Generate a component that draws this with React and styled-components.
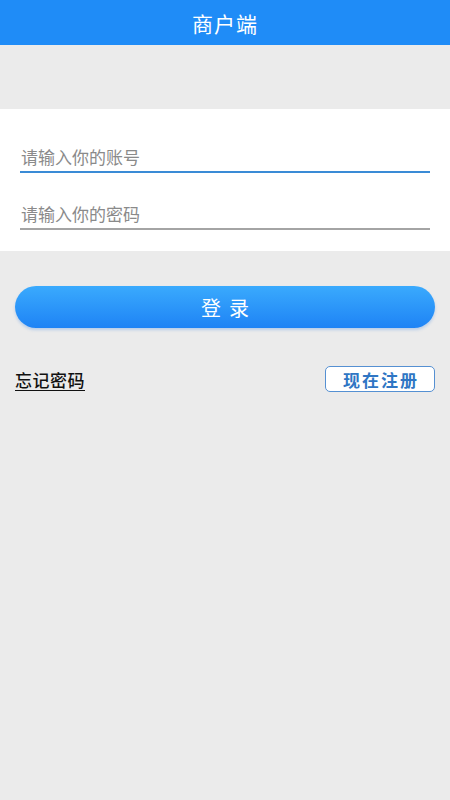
import React from 'react'
import styled, { createGlobalStyle } from 'styled-components';

const Global = createGlobalStyle`
  html, body {
    margin: 0;
    padding: 0;
    background: #ebebeb;
    font-family: "Noto Sans CJK SC", "Noto Sans", sans-serif;
  }
`;

const Page = styled.div`
  min-height: 800px;
  background: #ebebeb;
  display: flex;
  flex-direction: column;
`;

const Header = styled.div`
  height: 45px;
  background: #1f8cf7;
  color: white;
  font-size: 21px;
  display: flex;
  align-items: center;
  justify-content: center;
  letter-spacing: 1px;
`;

const Panel = styled.div`
  margin-top: 64px;
  background: white;
  padding: 30px 20px 21px;
  display: flex;
  flex-direction: column;
  gap: 23px;
`;

const Field = styled.input`
  border: none;
  outline: none;
  border-bottom: 2px solid ${p => (p.$active ? '#3a8bd6' : '#a4a4a4')};
  font-family: inherit;
  font-size: 17px;
  padding: 6px 1px 3px;
  height: 34px;
  box-sizing: border-box;
  background: transparent;
  &::placeholder {
    color: #8a8a8a;
  }
`;

const LoginButton = styled.button`
  margin: 35px 15px 0;
  height: 42px;
  border: none;
  border-radius: 21px;
  background: linear-gradient(to bottom, #3aaafd, #1e83f5);
  box-shadow: 0 2px 3px rgba(30, 120, 230, 0.25);
  color: white;
  font-family: inherit;
  font-size: 20px;
  letter-spacing: 8px;
  text-indent: 8px;
`;

const Row = styled.div`
  margin: 38px 15px 0;
  display: flex;
  align-items: center;
  justify-content: space-between;
`;

const Forgot = styled.a`
  color: #111;
  font-size: 17px;
  font-weight: 500;
  letter-spacing: 0.5px;
  text-decoration: underline;
  text-underline-offset: 3px;
`;

const Register = styled.button`
  width: 110px;
  height: 26px;
  box-sizing: border-box;
  background: white;
  border: 1px solid #5590d2;
  border-radius: 5px;
  color: #2f76c4;
  font-family: inherit;
  font-size: 17px;
  font-weight: bold;
  letter-spacing: 2px;
  text-indent: 2px;
  line-height: 1;
  padding: 0;
`;

const App = () => {
    return (
        <>
            <Global />
            <Page>
                <Header>商户端</Header>
                <Panel>
                    <Field $active placeholder="请输入你的账号" />
                    <Field type="password" placeholder="请输入你的密码" />
                </Panel>
                <LoginButton>登录</LoginButton>
                <Row>
                    <Forgot>忘记密码</Forgot>
                    <Register>现在注册</Register>
                </Row>
            </Page>
        </>
    )
}

export default App;
